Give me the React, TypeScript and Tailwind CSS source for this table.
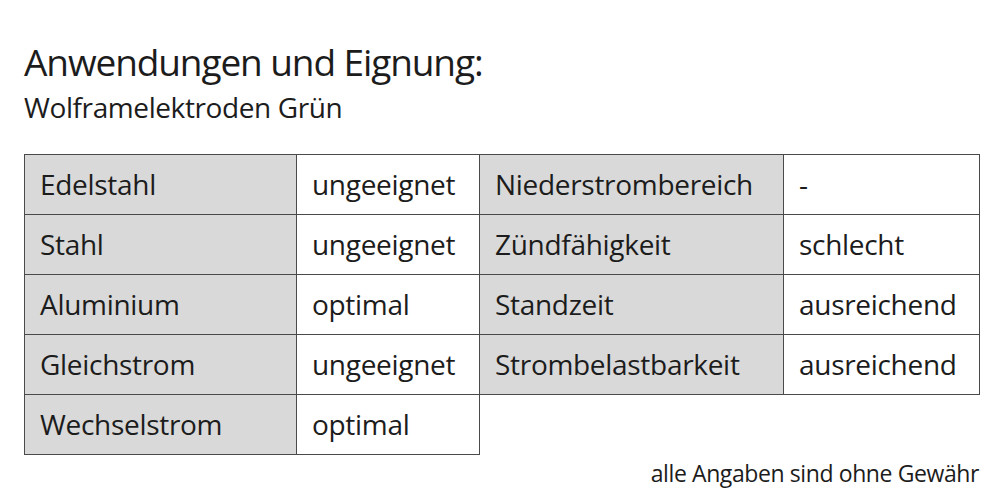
const rows: [string, string, string?, string?][] = [
  ['Edelstahl', 'ungeeignet', 'Niederstrombereich', '-'],
  ['Stahl', 'ungeeignet', 'Zündfähigkeit', 'schlecht'],
  ['Aluminium', 'optimal', 'Standzeit', 'ausreichend'],
  ['Gleichstrom', 'ungeeignet', 'Strombelastbarkeit', 'ausreichend'],
  ['Wechselstrom', 'optimal'],
];

export default function App() {
  return (
    <div
      className="w-[1004px] h-[502px] bg-white text-[#1c1c1c] pl-[24px] pt-[40px]"
      style={{ fontFamily: '"Open Sans", sans-serif' }}
    >
      <h1 className="text-[37px] leading-[44px] tracking-[-1.1px]">Anwendungen und Eignung:</h1>
      <p className="mt-[6px] text-[28px] leading-[34px] tracking-[-0.4px]">Wolframelektroden Grün</p>

      <table className="mt-[30px] border-collapse text-[28px] tracking-[-0.3px]">
        <tbody>
          {rows.map(([a, b, c, d]) => (
            <tr key={a} className="h-[60px]">
              <td className="w-[272px] bg-[#d9d9d9] border border-[#4a4a4a] pl-[15px] pb-[2px] pt-0">{a}</td>
              <td className="w-[183px] bg-white border border-[#4a4a4a] pl-[15px] pb-[2px] pt-0">{b}</td>
              {c ? (
                <>
                  <td className="w-[304px] bg-[#d9d9d9] border border-[#4a4a4a] pl-[15px] pb-[2px] pt-0">{c}</td>
                  <td className="w-[196px] bg-white border border-[#4a4a4a] pl-[15px] pb-[2px] pt-0">{d}</td>
                </>
              ) : (
                <>
                  <td className="w-[304px]" />
                  <td className="w-[196px]" />
                </>
              )}
            </tr>
          ))}
        </tbody>
      </table>

      <div className="w-[955px] flex justify-end mt-[3px]">
        <span className="text-[23px] leading-[30px] tracking-[-0.4px]">alle Angaben sind ohne Gewähr</span>
      </div>
    </div>
  );
}
